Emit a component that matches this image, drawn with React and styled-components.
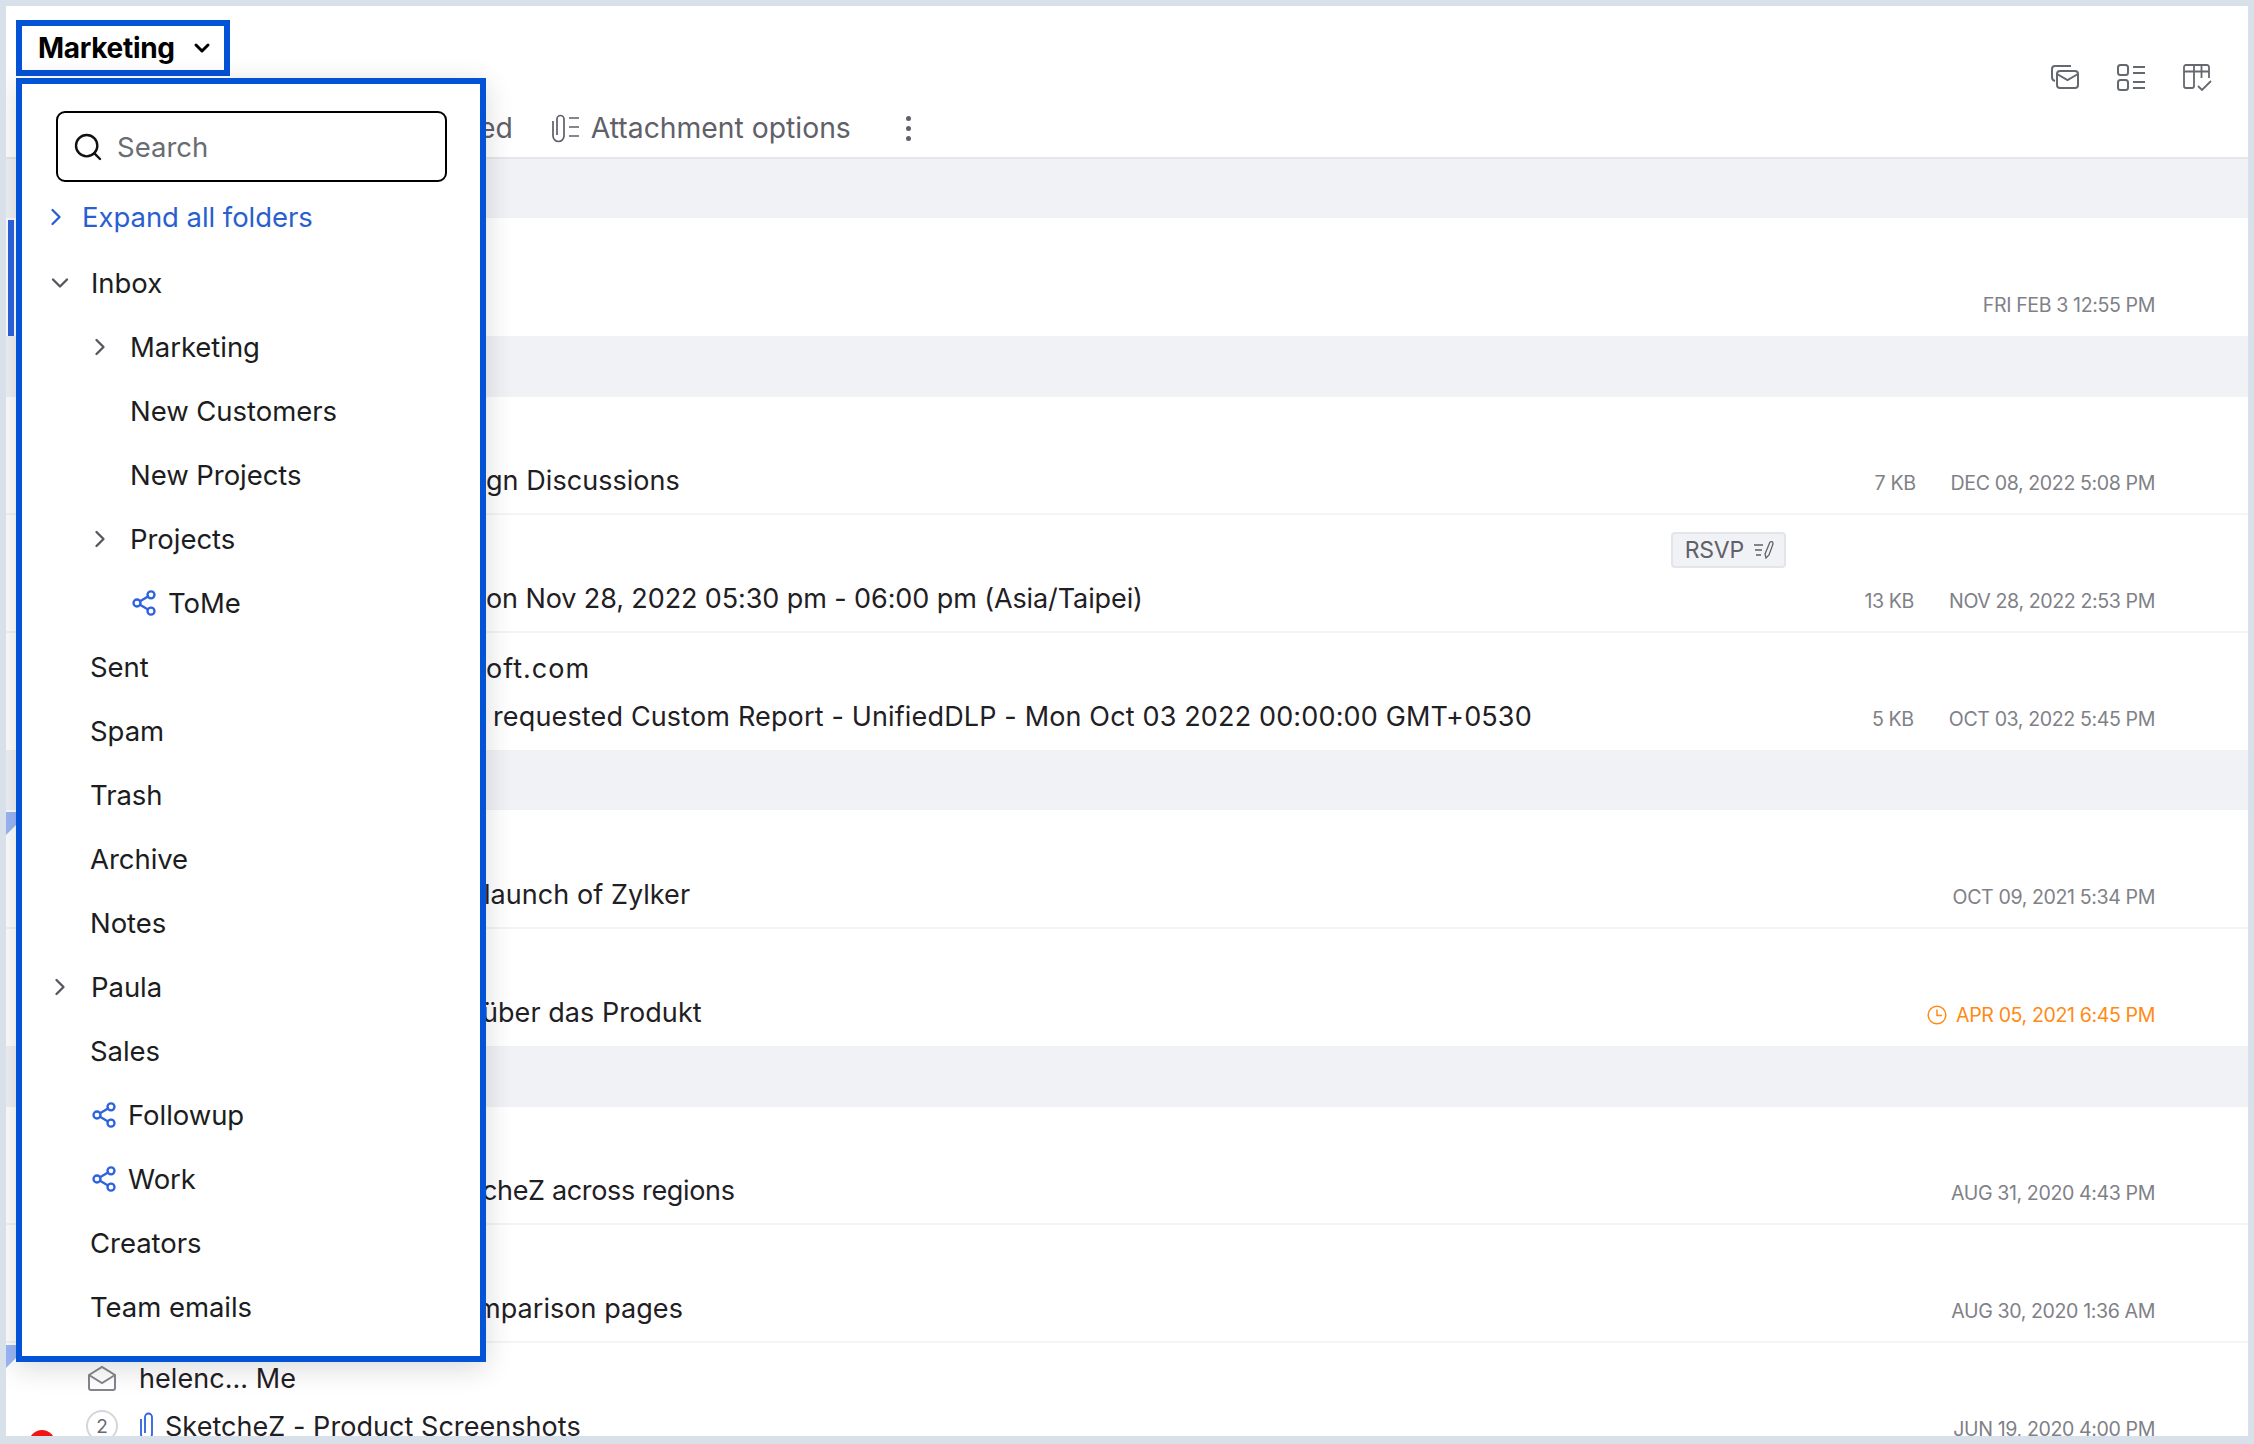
import styled, { createGlobalStyle } from "styled-components";
import { ChevronDown, ChevronRight, Search, Share2 } from "lucide-react";

const GlobalStyle = createGlobalStyle`
  html, body {
    margin: 0;
    padding: 0;
    background: #fff;
  }
  body {
    font-family: "Inter", "Noto Sans", sans-serif;
    color: #1c1d21;
  }
`;

// page frame
const Frame = styled.div`
  position: relative;
  box-sizing: border-box;
  width: 2254px;
  height: 1444px;
  overflow: hidden;
  background: #fff;
  border: 6px solid #d8e1ea;
  border-bottom-width: 8px;
`;

// toolbar
const Toolbar = styled.header`
  box-sizing: border-box;
  height: 153px;
  border-bottom: 2px solid #e6e7ea;
`;
const HeaderRow = styled.div`
  box-sizing: border-box;
  display: flex;
  justify-content: space-between;
  align-items: flex-start;
  height: 91px;
  padding: 14px 36px 0 10px;
`;
const FolderButton = styled.div`
  box-sizing: border-box;
  display: flex;
  align-items: center;
  gap: 15px;
  width: 214px;
  height: 56px;
  padding-left: 16px;
  border: 6px solid #0353d6;
  font-size: 28px;
  font-weight: 700;
  letter-spacing: -0.3px;
  color: #000;
`;
const ViewIcons = styled.div`
  display: flex;
  align-self: flex-end;
  gap: 36px;
  margin-bottom: 5px;
  color: #66686f;
`;
const TabRow = styled.div`
  box-sizing: border-box;
  display: flex;
  align-items: center;
  height: 60px;
  padding: 2px 0 0 473px;
  color: #5f6068;
  font-size: 28.3px;
`;
const TabLabel = styled.span`
  display: flex;
  align-items: center;
  gap: 11px;
  margin-left: ${(p) => p.$offset || 0}px;
`;
const MoreDots = styled.span`
  display: flex;
  flex-direction: column;
  gap: 5px;
  margin-left: 55px;
  i {
    display: block;
    width: 5px;
    height: 5px;
    border-radius: 50%;
    background: #5f6068;
  }
`;

// mail list
const Band = styled.div`
  height: ${(p) => p.$height || 60}px;
  background: #f1f2f6;
`;
const MailRow = styled.div`
  position: relative;
  box-sizing: border-box;
  display: flex;
  flex-direction: column;
  height: ${(p) => p.$height || 118}px;
  padding-top: ${(p) => (p.$tight ? 11 : 12)}px;
  border-bottom: ${(p) => (p.$noBorder ? "none" : "2px solid #f3f4f6")};
`;
const Line = styled.div`
  display: flex;
  align-items: center;
  height: 48px;
  flex: none;
  padding-left: ${(p) => p.$indent || 0}px;
  padding-right: 93px;
  font-size: 27px;
  letter-spacing: ${(p) => p.$tracking ?? 0.05}px;
  color: #1f2024;
  white-space: nowrap;
`;
const Subject = styled.span`
  display: flex;
  align-items: center;
  flex: 1;
  gap: ${(p) => p.$gap || 0}px;
`;
const Meta = styled.div`
  display: flex;
  align-items: center;
  gap: 35px;
  padding-top: 6px;
  font-size: 19.6px;
  letter-spacing: -0.4px;
  color: #808187;
`;
const DateText = styled.span`
  display: flex;
  align-items: center;
  gap: 9px;
  color: ${(p) => (p.$overdue ? "#ff8a14" : "#808187")};
`;
const RsvpTag = styled.span`
  box-sizing: border-box;
  display: flex;
  align-items: center;
  gap: 9px;
  height: 36px;
  margin-left: auto;
  margin-right: 369px;
  padding: 0 9px 0 12px;
  background: #f1f2f6;
  border: 2px solid #e4e5e9;
  border-radius: 4px;
  font-size: 23px;
  letter-spacing: -0.2px;
  color: #5f6068;
`;
const SelectedBar = styled.span`
  position: absolute;
  left: 2px;
  top: 2px;
  width: 6px;
  height: 116px;
  background: #2e62e0;
`;
const CornerFlag = styled.span`
  position: absolute;
  left: 0;
  top: 2px;
  width: 0;
  height: 0;
  border-top: 23px solid #9bb6f7;
  border-right: 23px solid transparent;
`;
const CountBadge = styled.span`
  box-sizing: border-box;
  display: flex;
  align-items: center;
  justify-content: center;
  width: 32px;
  height: 32px;
  margin-right: 11px;
  border: 2px solid #d5d6da;
  border-radius: 50%;
  font-size: 19px;
  color: #66686f;
`;
const RedDot = styled.span`
  position: absolute;
  left: 23px;
  top: 87px;
  width: 26px;
  height: 26px;
  border-radius: 50%;
  background: #f01414;
`;

// folder dropdown
const Dropdown = styled.aside`
  position: absolute;
  z-index: 5;
  left: 10px;
  top: 72px;
  box-sizing: border-box;
  width: 470px;
  padding: 27px 0 17px;
  background: #fff;
  border: 6px solid #0353d6;
  box-shadow: 0 6px 26px rgba(20, 25, 40, 0.16);
`;
const SearchBox = styled.div`
  box-sizing: border-box;
  display: flex;
  align-items: center;
  gap: 13px;
  width: 391px;
  height: 71px;
  margin: 0 34px 3px;
  padding-left: 14px;
  border: 2px solid #000;
  border-radius: 9px;
  font-size: 27.500px;
  color: #6a6c73;
`;
const TreeRow = styled.div`
  display: flex;
  align-items: center;
  height: 64px;
  padding-left: ${(p) => p.$indent}px;
  gap: ${(p) => p.$gap || 0}px;
  font-size: 27.500px;
  letter-spacing: -0.05px;
  color: ${(p) => (p.$link ? "#2a5fd0" : "#1c1d21")};
  margin-bottom: ${(p) => (p.$link ? 2 : 0)}px;
`;

const MailStackIcon = () => (
  <svg width="30" height="28" viewBox="0 0 30 28" fill="none" stroke="currentColor" strokeWidth="2">
    <path d="M21 3H5a3 3 0 0 0-3 3v8a4 4 0 0 0 3 4" />
    <rect x="7" y="8" width="21" height="17" rx="3" />
    <path d="M7 11l10.500 6L28 11" />
  </svg>
);
const ListIcon = () => (
  <svg width="30" height="28" viewBox="0 0 30 28" fill="none" stroke="currentColor" strokeWidth="2">
    <rect x="2" y="2" width="10" height="10" rx="2.500" />
    <rect x="2" y="17" width="10" height="10" rx="2.500" />
    <path d="M17 4h12M17 10h12M17 19h12M17 25h12" />
  </svg>
);
const TableCheckIcon = () => (
  <svg width="30" height="29" viewBox="0 0 30 29" fill="none" stroke="currentColor" strokeWidth="1.800">
    <path d="M27 15V4a2 2 0 0 0-2-2H4a2 2 0 0 0-2 2v19a2 2 0 0 0 2 2h6a2 2 0 0 0 2-2V2M2 8.500h25M19.500 2v13" />
    <path d="M16 23l4 4 9-9" />
  </svg>
);
const AttachOptionsIcon = () => (
  <svg width="29" height="30" viewBox="0 0 29 30" fill="none" stroke="currentColor" strokeWidth="1.700">
    <path d="M2 8v15a5.500 5.500 0 0 0 11 0V6a3.500 3.500 0 0 0-7 0v16" />
    <path d="M18 5h10M18 14h10M18 23h10" />
  </svg>
);
const ClockIcon = () => (
  <svg width="20" height="20" viewBox="0 0 20 20" fill="none" stroke="currentColor" strokeWidth="1.500">
    <circle cx="10" cy="10" r="8.800" />
    <path d="M10 4.500V10.500H15" />
  </svg>
);
const PencilLinesIcon = () => (
  <svg width="22" height="20" viewBox="0 0 22 20" fill="none" stroke="currentColor" strokeWidth="1.300">
    <path d="M1 5h9M2 10h7M3 15h5" />
    <path d="M17 2c2-1 3 0 3 2l-4 11-3 3-1-4z" />
  </svg>
);
const OpenMailIcon = () => (
  <svg width="28" height="26" viewBox="0 0 28 26" fill="none" stroke="#85868c" strokeWidth="2">
    <path d="M1 10L14 2l13 8v13a2 2 0 0 1-2 2H3a2 2 0 0 1-2-2z" />
    <path d="M1 10l13 8 13-8" />
  </svg>
);
const ClipIcon = () => (
  <svg width="16" height="30" viewBox="0 0 16 30" fill="none" stroke="#2e62e0" strokeWidth="1.800">
    <path d="M2 8v15a5.500 5.500 0 0 0 11 0V6a3.500 3.500 0 0 0-7 0v16" />
  </svg>
);

const FOLDERS = [
  { label: "Inbox", arrow: "down", indent: 24, gap: 17 },
  { label: "Marketing", arrow: "right", indent: 64, gap: 16 },
  { label: "New Customers", indent: 108 },
  { label: "New Projects", indent: 108 },
  { label: "Projects", arrow: "right", indent: 64, gap: 16 },
  { label: "ToMe", shared: true, indent: 108, gap: 10 },
  { label: "Sent", indent: 68 },
  { label: "Spam", indent: 68 },
  { label: "Trash", indent: 68 },
  { label: "Archive", indent: 68 },
  { label: "Notes", indent: 68 },
  { label: "Paula", arrow: "right", indent: 24, gap: 17 },
  { label: "Sales", indent: 68 },
  { label: "Followup", shared: true, indent: 68, gap: 10 },
  { label: "Work", shared: true, indent: 68, gap: 10 },
  { label: "Creators", indent: 68 },
  { label: "Team emails", indent: 68 },
];

const FolderMenu = () => (
  <Dropdown>
    <SearchBox>
      <Search size={32} strokeWidth={1.8} color="#111" />
      Search
    </SearchBox>
    <TreeRow $link $indent={20} $gap={12}>
      <ChevronRight size={28} strokeWidth={2} />
      Expand all folders
    </TreeRow>
    {FOLDERS.map((f) => (
      <TreeRow key={f.label} $indent={f.indent} $gap={f.gap}>
        {f.arrow === "down" && <ChevronDown size={28} strokeWidth={2} color="#55575d" />}
        {f.arrow === "right" && <ChevronRight size={28} strokeWidth={2} color="#55575d" />}
        {f.shared && <Share2 size={28} strokeWidth={2} color="#2e62e0" />}
        {f.label}
      </TreeRow>
    ))}
  </Dropdown>
);

const App = () => (
  <Frame>
    <GlobalStyle />
    <Toolbar>
      <HeaderRow>
        <FolderButton>
          Marketing
          <ChevronDown size={24} strokeWidth={3} />
        </FolderButton>
        <ViewIcons>
          <MailStackIcon />
          <ListIcon />
          <TableCheckIcon />
        </ViewIcons>
      </HeaderRow>
      <TabRow>
        ed
        <TabLabel $offset={38}>
          <AttachOptionsIcon />
          Attachment options
        </TabLabel>
        <MoreDots>
          <i />
          <i />
          <i />
        </MoreDots>
      </TabRow>
    </Toolbar>

    <Band $height={59} />
    <MailRow $noBorder>
      <SelectedBar />
      <Line />
      <Line>
        <Subject />
        <Meta>
          <DateText>FRI FEB 3 12:55 PM</DateText>
        </Meta>
      </Line>
    </MailRow>

    <Band $height={61} />
    <MailRow $tight>
      <Line />
      <Line $indent={480}>
        <Subject>gn Discussions</Subject>
        <Meta>
          <span>7 KB</span>
          <DateText>DEC 08, 2022 5:08 PM</DateText>
        </Meta>
      </Line>
    </MailRow>
    <MailRow $tight>
      <Line>
        <RsvpTag>
          RSVP
          <PencilLinesIcon />
        </RsvpTag>
      </Line>
      <Line $indent={480} $tracking={-0.1}>
        <Subject>on Nov 28, 2022 05:30 pm - 06:00 pm (Asia/Taipei)</Subject>
        <Meta>
          <span>13 KB</span>
          <DateText>NOV 28, 2022 2:53 PM</DateText>
        </Meta>
      </Line>
    </MailRow>
    <MailRow $tight $noBorder $height={117}>
      <Line $indent={480} $tracking={1}>oft.com</Line>
      <Line $indent={487} $tracking={0.15}>
        <Subject>requested Custom Report - UnifiedDLP - Mon Oct 03 2022 00:00:00 GMT+0530</Subject>
        <Meta>
          <span>5 KB</span>
          <DateText>OCT 03, 2022 5:45 PM</DateText>
        </Meta>
      </Line>
    </MailRow>

    <Band />
    <MailRow $height={119}>
      <CornerFlag />
      <Line />
      <Line $indent={478}>
        <Subject>launch of Zylker</Subject>
        <Meta>
          <DateText>OCT 09, 2021 5:34 PM</DateText>
        </Meta>
      </Line>
    </MailRow>
    <MailRow $tight $noBorder $height={117}>
      <Line />
      <Line $indent={476}>
        <Subject>über das Produkt</Subject>
        <Meta>
          <DateText $overdue>
            <ClockIcon />
            APR 05, 2021 6:45 PM
          </DateText>
        </Meta>
      </Line>
    </MailRow>

    <Band $height={61} />
    <MailRow $tight>
      <Line />
      <Line $indent={476} $tracking={-0.35}>
        <Subject>cheZ across regions</Subject>
        <Meta>
          <DateText>AUG 31, 2020 4:43 PM</DateText>
        </Meta>
      </Line>
    </MailRow>
    <MailRow $tight>
      <Line />
      <Line $indent={471}>
        <Subject>mparison pages</Subject>
        <Meta>
          <DateText>AUG 30, 2020 1:36 AM</DateText>
        </Meta>
      </Line>
    </MailRow>
    <MailRow $tight $noBorder>
      <CornerFlag />
      <RedDot />
      <Line $indent={82}>
        <Subject $gap={23}>
          <OpenMailIcon />
          helenc... Me
        </Subject>
      </Line>
      <Line $indent={80}>
        <Subject $gap={10}>
          <CountBadge>2</CountBadge>
          <ClipIcon />
          SketcheZ - Product Screenshots
        </Subject>
        <Meta>
          <DateText>JUN 19, 2020 4:00 PM</DateText>
        </Meta>
      </Line>
    </MailRow>

    <FolderMenu />
  </Frame>
);

export default App;
